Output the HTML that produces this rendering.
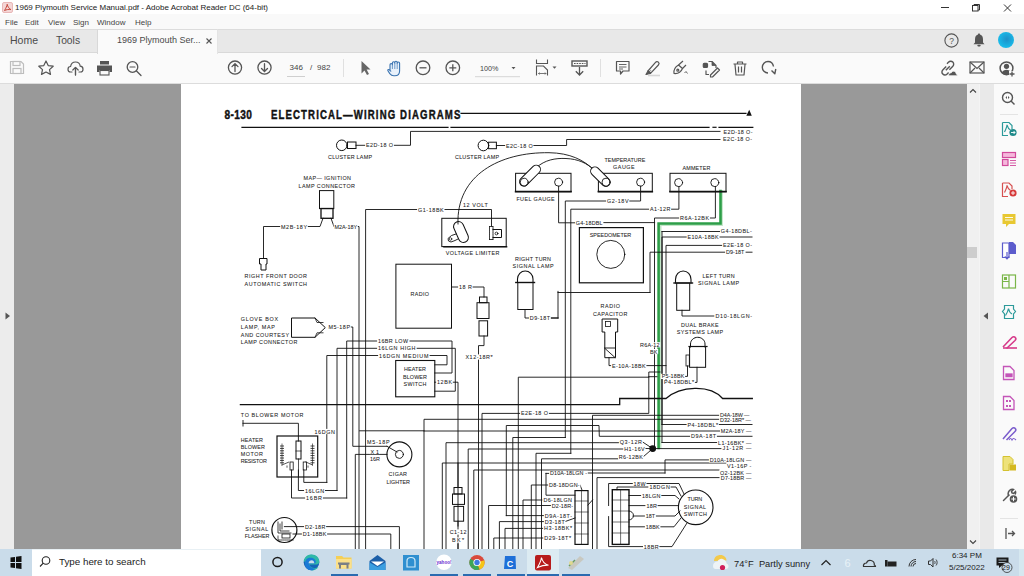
<!DOCTYPE html>
<html><head><meta charset="utf-8">
<style>
*{margin:0;padding:0;box-sizing:border-box}
html,body{width:1024px;height:576px;overflow:hidden;background:#fff;font-family:"Liberation Sans",sans-serif;position:relative}
.a{position:absolute}
#title{left:0;top:0;width:1024px;height:15px;background:#fff}
#menu{left:0;top:14px;width:1024px;height:15px;background:#f9f9f9}
#tabs{left:0;top:29px;width:1024px;height:24px;background:#e8e8e8;border-top:1px solid #dcdcdc;border-bottom:1px solid #d9d9d9}
#tool{left:0;top:53px;width:1024px;height:31px;background:#fafafa;border-bottom:1px solid #dcdcdc}
#lpanel{left:0;top:84px;width:14px;height:465px;background:#ececec}
#gray{left:14px;top:84px;width:953px;height:465px;background:#999}
#page{left:181px;top:84px;width:620px;height:465px;background:#fff}
#vscroll{left:967px;top:84px;width:12px;height:465px;background:#f0f0f0}
#rcoll{left:979px;top:84px;width:15px;height:465px;background:#e9e9e9;border-left:1px solid #f4f4f4}
#rpanel{left:994px;top:84px;width:30px;height:465px;background:#fafafa}
#task{left:0;top:549px;width:1024px;height:27px;background:#cadcea}
.t{position:absolute;white-space:nowrap;color:#222}
</style></head><body>
<div id="title" class="a"></div>
<div id="menu" class="a"></div>
<div id="tabs" class="a"></div>
<div id="tool" class="a"></div>
<div id="lpanel" class="a"></div>
<div id="gray" class="a"></div>
<div id="page" class="a"></div>
<div id="vscroll" class="a"></div>
<div id="rcoll" class="a"></div>
<div id="rpanel" class="a"></div>
<div id="task" class="a"></div>
<!-- TITLE BAR -->
<svg class="a" style="left:2px;top:2px" width="11" height="11" viewBox="0 0 11 11"><rect x="0.5" y="0.5" width="10" height="10" rx="1.5" fill="#f4d6d6" stroke="#e8b8b8"/><path d="M2.5 8.5 C4 6 5 4 5.2 2.3 C5.6 4.5 7 6.5 8.8 7.5 C6.5 7.2 4.5 7.6 2.5 8.5Z" fill="none" stroke="#c0392b" stroke-width="0.9"/></svg>
<div class="t" style="left:15px;top:3px;font-size:8px;line-height:10px;color:#1a1a1a">1969 Plymouth Service Manual.pdf - Adobe Acrobat Reader DC (64-bit)</div>
<svg class="a" style="left:938px;top:3px" width="80" height="10" viewBox="0 0 80 10">
 <line x1="3" y1="4.5" x2="11" y2="4.5" stroke="#333" stroke-width="1"/>
 <rect x="34.5" y="2.5" width="5.5" height="5.5" fill="none" stroke="#333" stroke-width="1"/><path d="M36 2.5V1.5H41.5V7H40" fill="none" stroke="#333" stroke-width="1"/>
 <path d="M66 1.5L73 8.5M73 1.5L66 8.5" stroke="#333" stroke-width="1"/>
</svg>
<!-- MENU -->
<div class="t" style="left:5px;top:18px;font-size:8px;line-height:10px;color:#444">File</div>
<div class="t" style="left:25px;top:18px;font-size:8px;line-height:10px;color:#444">Edit</div>
<div class="t" style="left:48px;top:18px;font-size:8px;line-height:10px;color:#444">View</div>
<div class="t" style="left:73px;top:18px;font-size:8px;line-height:10px;color:#444">Sign</div>
<div class="t" style="left:97px;top:18px;font-size:8px;line-height:10px;color:#444">Window</div>
<div class="t" style="left:135px;top:18px;font-size:8px;line-height:10px;color:#444">Help</div>
<!-- TABS -->
<div class="t" style="left:10px;top:34px;font-size:10.5px;line-height:13px;color:#4a4a4a">Home</div>
<div class="t" style="left:56px;top:34px;font-size:10.3px;line-height:13px;color:#4a4a4a">Tools</div>
<div class="a" style="left:97px;top:29px;width:121px;height:25px;background:#fafafa;border-left:1px solid #d8d8d8;border-right:1px solid #e4e4e4;border-top:1px solid #dcdcdc"></div>
<div class="t" style="left:117px;top:35px;font-size:9px;line-height:11px;color:#4a4a4a">1969 Plymouth Ser...</div>
<svg class="a" style="left:205px;top:37px" width="8" height="8" viewBox="0 0 8 8"><path d="M1.5 1.5L6.5 6.5M6.5 1.5L1.5 6.5" stroke="#555" stroke-width="1.1"/></svg>
<svg class="a" style="left:943px;top:32px" width="17" height="17" viewBox="0 0 17 17"><circle cx="8.5" cy="8.5" r="6.6" fill="none" stroke="#555" stroke-width="1.1"/><text x="8.5" y="11.6" font-size="8.5" text-anchor="middle" fill="#555" font-family="Liberation Sans">?</text></svg>
<svg class="a" style="left:972px;top:32px" width="14" height="16" viewBox="0 0 14 16"><path d="M7 1.5C7.8 1.5 8 2 8 2.6C10.2 3.2 11 5 11 7.5V10.5L12.5 12.2H1.5L3 10.5V7.5C3 5 3.8 3.2 6 2.6C6 2 6.2 1.5 7 1.5Z" fill="#555"/><rect x="5.3" y="12.8" width="3.4" height="1.6" rx="0.8" fill="#555"/></svg>
<div class="a" style="left:998px;top:32px;width:16px;height:16px;border-radius:50%;background:radial-gradient(circle at 55% 45%,#1e90c8,#19b6e6 60%,#3cc9ee)"></div>
<!-- TOOLBAR -->
<svg class="a" style="left:0;top:53px" width="1024" height="30" viewBox="0 53 1024 30">
 <g fill="none" stroke="#bdbdbd" stroke-width="1.2">
  <path d="M10.5 61.5H21L23.5 64V73.5H10.5Z"/><rect x="13" y="61.5" width="7" height="4"/><rect x="13" y="68.5" width="8" height="5"/>
 </g>
 <g fill="none" stroke="#555" stroke-width="1.2" stroke-linejoin="round" stroke-linecap="round">
  <path d="M46 61L48.2 65.6L53.2 66.2L49.5 69.6L50.5 74.4L46 72L41.5 74.4L42.5 69.6L38.8 66.2L43.8 65.6Z"/>
  <path d="M72 72H70.5C68.8 72 68 70.6 68 69.2C68 67.6 69.2 66.5 70.6 66.5C71 63.8 73 62 75.5 62C78.2 62 80 64 80.2 66.2C81.8 66.3 83 67.5 83 69.2C83 70.8 82 72 80.5 72H79"/><path d="M75.5 75V67.5M72.8 70L75.5 67.3L78.2 70"/>
  <path d="M75.5 75V67.5"/>
 </g>
 <g fill="#555">
  <rect x="100" y="61" width="9" height="3.5"/><path d="M97 65.5H112V72H109.5V70H99.5V72H97Z"/><rect x="100" y="70.5" width="9" height="4.5" fill="none" stroke="#555" stroke-width="1.1"/>
 </g>
 <g fill="none" stroke="#555" stroke-width="1.3" stroke-linecap="round">
  <circle cx="132.5" cy="67" r="5.3"/><path d="M136.5 71L141 75.5"/><path d="M130 67H135" stroke-width="1.1"/>
  <circle cx="235" cy="67.6" r="6.6"/><path d="M235 71.5V63.8M232 66.6L235 63.6L238 66.6"/>
  <circle cx="264.5" cy="67.6" r="6.6"/><path d="M264.5 63.7V71.4M261.5 68.5L264.5 71.5L267.5 68.5"/>
 </g>
 <line x1="287" y1="76.5" x2="305" y2="76.5" stroke="#cfcfcf" stroke-width="1"/>
 <line x1="343.5" y1="59" x2="343.5" y2="77" stroke="#e0e0e0" stroke-width="1"/>
 <path d="M361.5 61V73.5L364.5 70.5L367 75L369 74L366.6 69.6H370.5Z" fill="#666"/>
 <path d="M390 70.5V64.8a1.2 1.2 0 0 1 2.4 0V63a1.2 1.2 0 0 1 2.4 0V62.4a1.2 1.2 0 0 1 2.4 0V63.2a1.2 1.2 0 0 1 2.4 0V71c0 3-2 4.8-4.8 4.8h-1c-1.8 0-3-.8-4-2.2l-1.9-2.9c-.5-.8.4-1.6 1.2-1l1.7 1.5Z" fill="#e8f1fb" stroke="#3a73b0" stroke-width="1.1" stroke-linejoin="round"/><path d="M392.4 65V69M394.8 63V69M397.2 63.2V69" stroke="#3a73b0" stroke-width="0.7"/>
 <g fill="none" stroke="#555" stroke-width="1.3">
  <circle cx="423" cy="67.8" r="6.8"/><path d="M419.5 67.8H426.5"/>
  <circle cx="452.8" cy="67.8" r="6.8"/><path d="M449.3 67.8H456.3M452.8 64.3V71.3"/>
 </g>
 <line x1="475" y1="76.7" x2="520" y2="76.7" stroke="#d6d6d6" stroke-width="1"/>
 <path d="M511.5 67L513.5 69.2L515.5 67Z" fill="#555"/>
 <g fill="none" stroke="#555" stroke-width="1.1">
  <path d="M536.5 59.5V63.5H547.5V59.5"/><path d="M536.5 75.5V66H543.5L547.5 70V75.5"/><path d="M538.5 73.5H546M539.5 72.5L538.5 73.5L539.5 74.5M545 72.5L546 73.5L545 74.5" stroke-width="0.8"/>
 </g>
 <path d="M552.5 66.5L554.5 68.7L556.5 66.5Z" fill="#555"/>
 <g fill="none" stroke="#555" stroke-width="1.2">
  <rect x="572" y="61" width="15" height="5" stroke-width="1.4"/><path d="M579.5 67V75M575.8 71.3L579.5 75L583.2 71.3" stroke-width="1.3"/><path d="M574 63.5H585.5" stroke-dasharray="1.6 1" stroke-width="1.2"/>
 </g>
 <line x1="600.5" y1="59" x2="600.5" y2="77" stroke="#e0e0e0" stroke-width="1"/>
 <g fill="none" stroke="#555" stroke-width="1.2" stroke-linejoin="round">
  <path d="M616.5 61.5H629V71H623L620.5 74V71H616.5Z"/><path d="M619 64.5H626.5M619 67H626.5M619 69H623" stroke-width="0.9"/>
  <path d="M648 71L655.5 62.3C656.3 61.4 657.6 61.4 658.4 62.2C659.2 63 659.2 64.2 658.4 65L650.5 73.3Z"/><path d="M649 72.3L651 70.2" stroke-width="0.8"/><path d="M648 71L646 74.5L650.5 73.3Z" fill="#555"/><path d="M648 75.5H660" stroke="#d6d6d6" stroke-width="1.6"/>
  <path d="M674 73.5C673.5 70 675 67 678.5 65L682.5 68.5C681 72 678.5 74 674 73.5Z"/><path d="M678.5 65L683 61M682.5 68.5L686 65"/><path d="M684.5 73L686 71.5L687.5 73.5" stroke-width="0.9"/><circle cx="677.8" cy="70.2" r="1"/>
  <path d="M708.5 61.5H712L716 65.5V68"/><path d="M712 61.5V65.5H716" fill="#555" stroke-width="0.8"/><path d="M706 70.5V74.5H709"/><path d="M710.5 75L717.5 68L719.5 70L712.5 77H710.5Z"/><rect x="703.3" y="63.3" width="4.2" height="4.2" rx="1" fill="#555"/>
  <path d="M733.5 64H746.5M737.5 64V62H742.5V64M735 64.5L736 75H744L745 64.5M738.5 66.5V72.5M741.5 66.5V72.5"/>
  <path d="M773.5 66.5C773 63.6 770.8 61.5 768 61.5C764.8 61.5 762.3 64 762.3 67.3C762.3 70.5 764.8 73 768 73" stroke-width="1.4"/><path d="M771.5 70.5L774.8 73.8L775.8 69" stroke-width="1.4"/>
 </g>
  <g fill="none" stroke="#555" stroke-width="1.4"><path d="M946.2 66.5L943 69.7C941.6 71.1 941.6 72.9 942.8 74.1C944 75.3 945.8 75.3 947.2 73.9L948.6 72.5"/><path d="M945.8 70.2L949.8 66.2"/><path d="M949.4 69.7L952.6 66.5C954 65.1 954 63.3 952.8 62.1C951.6 60.9 949.8 60.9 948.4 62.3L947 63.7"/></g><path d="M948.5 75.8C948.5 74 949.6 72.8 951.2 72.8C951.8 71.6 952.9 71 954 71.2C955.4 71.5 956.2 72.6 956.2 73.9C957 74.1 957.5 74.8 957.5 75.8Z" fill="#555" stroke="#fafafa" stroke-width="0.8"/>
 <g fill="none" stroke="#555" stroke-width="1.2">
  <rect x="970" y="62" width="14" height="11"/><path d="M970 62L977 68.5L984 62M970 73L975 68M984 73L979 68"/>
 </g>
 <circle cx="1006.5" cy="68.3" r="6.4" fill="none" stroke="#555" stroke-width="1.5"/><circle cx="1006.5" cy="66.3" r="2.6" fill="#555"/><path d="M1001.8 72.8C1002.8 70.6 1004.5 69.8 1006.5 69.8C1008.5 69.8 1010.2 70.6 1011.2 72.8C1010 74.2 1008.4 75 1006.5 75C1004.6 75 1003 74.2 1001.8 72.8Z" fill="#555"/><rect x="1009" y="71" width="6" height="6" fill="#fafafa"/><path d="M1012 71.5V76.5M1009.5 74H1014.5" stroke="#555" stroke-width="1.3"/>
</svg>
<div class="t" style="left:289.5px;top:62.5px;font-size:8px;line-height:10px;color:#444">346</div>
<div class="t" style="left:310px;top:62.5px;font-size:8px;line-height:10px;color:#444">/</div><div class="t" style="left:317px;top:62.5px;font-size:8px;line-height:10px;color:#444">982</div>
<div class="t" style="left:480px;top:64px;font-size:7.2px;line-height:9px;color:#444">100%</div>

<!-- LEFT PANEL ARROW -->
<svg class="a" style="left:4px;top:311px" width="8" height="10" viewBox="0 0 8 10"><path d="M1.5 1.5L6 5L1.5 8.5Z" fill="#555"/></svg>
<!-- SCROLLBAR -->
<svg class="a" style="left:967px;top:86px" width="12" height="10" viewBox="0 0 12 10"><path d="M3 6.5L6 3.5L9 6.5" fill="none" stroke="#444" stroke-width="1.1"/></svg>
<div class="a" style="left:967px;top:247px;width:10px;height:11px;background:#cdcdcd"></div>
<svg class="a" style="left:967px;top:537px" width="12" height="10" viewBox="0 0 12 10"><path d="M3 3.5L6 6.5L9 3.5" fill="none" stroke="#444" stroke-width="1.1"/></svg>
<svg class="a" style="left:981px;top:311px" width="10" height="10" viewBox="0 0 10 10"><path d="M7 1.5L2.5 5L7 8.5Z" fill="#555"/></svg>
<!-- RIGHT PANEL ICONS -->
<svg class="a" style="left:994px;top:84px" width="30" height="465" viewBox="994 84 30 465">
 <g fill="none" stroke="#555" stroke-width="1.4"><circle cx="1007.5" cy="97.5" r="5"/><path d="M1011 101L1014.5 104.5"/></g><path d="M1005.5 97.5L1007 96V99Z M1009.5 97.5L1008 96V99Z" fill="#555"/>
 <line x1="1000" y1="114.5" x2="1018" y2="114.5" stroke="#e4e4e4"/>
 <g fill="none" stroke="#2c9a9a" stroke-width="1.2"><path d="M1002.5 122.5H1009L1012 125.5V129M1002.5 122.5V135.5H1008"/><path d="M1004.5 132C1006 129 1007 127 1007 124.8C1007.6 127 1008.5 129 1010.5 130"/></g><circle cx="1013" cy="132.5" r="3.6" fill="#1f8a8a"/><path d="M1011 132.5H1015M1013.6 131L1015 132.5L1013.6 134" stroke="#fff" stroke-width="0.9" fill="none"/>
 <g fill="none" stroke="#d14a9c" stroke-width="1.2"><rect x="1002.5" y="152.5" width="13" height="5" fill="#f5b8dc"/><rect x="1002.5" y="159.5" width="5.5" height="6" fill="#f5b8dc"/><path d="M1010 160.5H1016M1010 163H1016M1010 165.5H1016" stroke-width="0.9"/></g>
 <g fill="none" stroke="#d65050" stroke-width="1.2"><path d="M1002.5 183H1009L1012 186V189M1002.5 183V196.5H1008"/><path d="M1004.5 192.5C1006 189.5 1007 187.5 1007 185.3C1007.6 187.5 1008.5 189.5 1010.5 190.5"/></g><circle cx="1013" cy="193" r="3.6" fill="#d63a3a"/><path d="M1011 193H1015M1013 191V195" stroke="#fff" stroke-width="0.9"/>
 <path d="M1002.5 214H1015.5V224H1009L1006 227V224H1002.5Z" fill="#e8c832"/><path d="M1005 217.5H1013M1005 220H1013" stroke="#fff" stroke-width="0.9"/>
 <path d="M1002.5 243H1009V257.5H1002.5Z" fill="#fff" stroke="#5c5ccc" stroke-width="1.2"/><path d="M1009 242H1013L1016 245V254H1009Z" fill="#5c5ccc"/><path d="M1007 252V258.5M1004.8 256.5L1007 258.8L1009.2 256.5" stroke="#5c5ccc" stroke-width="1.2" fill="none"/>
 <g fill="none" stroke="#7ab648" stroke-width="1.2"><rect x="1002.5" y="275" width="13" height="13"/><path d="M1009 275V288M1002.5 281.5H1009"/></g><path d="M1004 277H1007V280H1004Z" fill="#7ab648"/>
 <g fill="none" stroke="#2c9a9a" stroke-width="1.2"><path d="M1004.5 305.5H1013.5V309L1015.5 311.5L1013.5 314V318.5H1004.5V314L1002.5 311.5L1004.5 309Z"/><path d="M1005.5 315.5C1007 313 1008 311 1008.5 308.5C1009 311 1010 313 1012 314"/></g>
 <g fill="none" stroke="#d63a8a" stroke-width="1.6"><path d="M1003 347L1012 337.5C1013 336.5 1014.5 336.5 1015.3 337.5C1016 338.3 1016 339.5 1015 340.5L1006.5 348.5"/><path d="M1003 348H1017"/></g>
 <g fill="none" stroke="#c455b8" stroke-width="1.3"><path d="M1003.5 366.5H1010L1014 370.5V379.5H1003.5Z"/><rect x="1006" y="374" width="6" height="2.6" fill="#c455b8"/></g>
 <g fill="none" stroke="#c455b8" stroke-width="1.3"><path d="M1003.5 396.5H1010L1014 400.5V409.5H1003.5Z"/></g><path d="M1006 400H1008V402H1006ZM1009 400H1011V402H1009ZM1006 405H1008V407H1006ZM1009 405H1011V407H1009Z" fill="#c455b8"/>
 <g fill="none" stroke="#7a5ccc" stroke-width="1.5"><path d="M1003 439L1012 428.5C1013 427.5 1014.5 427.5 1015.3 428.5C1016 429.3 1016 430.5 1015 431.5L1006.5 440"/><path d="M1009 440C1010 438 1011 438 1012 440C1013 438 1014 438 1016 440" stroke-width="1.1"/></g>
 <path d="M1003 456.5H1010L1013 459.5V464H1009V470.5H1003Z" fill="#eee27a" stroke="#d4c230" stroke-width="1"/><rect x="1009.5" y="464.5" width="6.5" height="6" fill="#d4b820"/>
 <g fill="none" stroke="#555" stroke-width="1.5" stroke-linecap="round"><path d="M1003.5 500.5L1009 495"/><path d="M1008.5 495.5C1007.5 493.5 1008.5 490.5 1011 489.5C1012 489.2 1013 489.3 1013.5 489.5L1011.5 491.5L1012 493L1013.5 493.5L1015.5 491.5C1015.7 492 1015.7 493 1015.3 494"/></g><circle cx="1013.5" cy="499" r="3.8" fill="#555"/><path d="M1011.3 499H1015.7M1013.5 496.8V501.2" stroke="#fff" stroke-width="1"/>
 <line x1="1000" y1="518.5" x2="1018" y2="518.5" stroke="#e4e4e4"/>
 <g fill="none" stroke="#555" stroke-width="1.3"><path d="M1006 528V539"/><path d="M1008 533.5H1014.5M1012 531L1014.5 533.5L1012 536"/></g>
</svg>
<!-- TASKBAR -->
<div class="a" style="left:32px;top:549px;width:229px;height:27px;background:#fff;border-top:1px solid #e8f0f4"></div>
<svg class="a" style="left:0;top:549px" width="1024" height="27" viewBox="0 549 1024 27">
 <path d="M10.5 557.5L15 557V562H10.5Z M16 556.8L21.5 556V562H16Z M10.5 563H15V568L10.5 567.5Z M16 563H21.5V569L16 568.2Z" fill="#111"/>
 <g fill="none" stroke="#222" stroke-width="1.1"><circle cx="46" cy="560.5" r="3.8"/><path d="M43.3 563.2L40 566.5"/></g>
 <circle cx="277.5" cy="562" r="4.6" fill="none" stroke="#1a1a1a" stroke-width="1.5"/>
 <!-- edge -->
 <circle cx="311.5" cy="562.5" r="7.8" fill="#1565b8"/>
 <path d="M304 561C304.5 556.5 308 554.6 311.8 554.6C316 554.6 319.3 557.6 319.3 561.8C319.3 563.5 318 564.5 316.5 564.5H309.5C309.8 567 312.5 568.5 315.5 568C316.8 567.8 317.8 567.4 318.5 567C317 569.2 314.5 570.4 311.8 570.4" fill="#2fb8a8"/>
 <path d="M305 563.5C305 559.5 307.5 557.8 310.5 557.8C313.5 557.8 315.8 559.5 315.8 562.2C315.8 563 315.3 563.4 314.5 563.4H309.3C309.3 566.5 312 568.5 315.5 568.4C314 569.8 312.3 570.4 310.8 570.3C307.5 570 305 567.3 305 563.5Z" fill="#1a7ad6"/>
 <path d="M308.5 563.2C308.8 561.3 310 560.3 311.6 560.3C313.2 560.3 314.2 561.3 314.3 563.2Z" fill="#cadcea"/>
 <!-- explorer -->
 <path d="M336 556H342L343.5 557.5H351.5V568.5H336Z" fill="#f5cf55"/><rect x="336" y="559" width="15.5" height="9.5" fill="#fbe08a"/><path d="M340 568.5V564H347.5V568.5" fill="none" stroke="#7a7f86" stroke-width="2"/><rect x="338" y="562.5" width="11.5" height="2" fill="#7a7f86"/>
 <rect x="331" y="574" width="27" height="2" fill="#2a6bb0"/>
 <!-- mail -->
 <path d="M369.5 561L377.5 555L385.5 561V570H369.5Z" fill="#1c5fa8"/><path d="M369.5 562.5L377.5 567L385.5 562.5V570H369.5Z" fill="#3a9ee0"/><path d="M371 561.5H384L377.5 566Z" fill="#fff"/>
 <!-- blue app -->
 <rect x="403" y="555" width="16" height="15.5" fill="#2f8fd0"/><path d="M407 567V561C407 558.5 408.8 557.5 411 557.5C413.2 557.5 415 558.5 415 561V567H407Z" fill="none" stroke="#cfeaf8" stroke-width="1.2"/>
 <rect x="430" y="574" width="28" height="2" fill="#2a6bb0"/>
 <!-- yahoo -->
 <circle cx="444" cy="562.3" r="7.8" fill="#fff"/><text x="444" y="564" font-size="4.6" text-anchor="middle" fill="#6a2bd0" font-family="Liberation Sans" font-weight="700">yahoo!</text>
 <rect x="463" y="574" width="28" height="2" fill="#2a6bb0"/>
 <!-- chrome -->
 <circle cx="477" cy="562.5" r="7.6" fill="#d94a3c"/><path d="M477 562.5L470.4 566.3A7.6 7.6 0 0 0 479.6 569.6Z" fill="#3aa757"/><path d="M477 562.5L484.3 560.3A7.6 7.6 0 0 1 479.6 569.6Z" fill="#f5c518"/><path d="M470.4 566.3A7.6 7.6 0 0 1 470.4 558.7L477 562.5Z" fill="#3aa757"/><circle cx="477" cy="562.5" r="3.6" fill="#fff"/><circle cx="477" cy="562.5" r="2.7" fill="#3b7ae0"/>
 <rect x="497" y="574" width="28" height="2" fill="#2a6bb0"/>
 <!-- C app -->
 <path d="M505 556H515.5L516 569H504Z" fill="#1e6fd8"/><text x="510" y="566.5" font-size="9" text-anchor="middle" fill="#fff" font-family="Liberation Sans" font-weight="700">C</text>
 <!-- acrobat -->
 <rect x="527" y="549" width="32" height="27" fill="#dcebf2"/>
 <rect x="535" y="555" width="16" height="15.5" rx="2" fill="#b71c1c"/><path d="M537.5 567.5C539.5 564 541 561 541.5 557.5C542.2 561 544 564 548.5 565.2C545 565 541 566 537.5 567.5Z" fill="none" stroke="#fff" stroke-width="1.1"/>
 <rect x="527" y="574" width="32" height="2" fill="#2a6bb0"/>
 <!-- last app -->
 <path d="M568 568L580 556L584 559L572 570Z" fill="#c8c8c0"/><path d="M569 566L575 560" stroke="#6a9a60" stroke-width="1.5"/><circle cx="571" cy="563" r="2" fill="#e0d890"/>
 <rect x="562" y="574" width="28" height="2" fill="#2a6bb0"/>
 <!-- weather -->
 <path d="M714 561C714 557 717 555 720.5 555C724 555 726.5 557.5 726.5 560.5Z" fill="#f3c94a"/><path d="M713 566C713 563 715 561.5 717.5 561.5C718.5 559.5 720.5 558.5 722.5 559C725 559.5 726.5 561.5 726.5 563.5C728 564 728.5 565 728.5 566.5C728.5 568 727.5 569 726 569H715.5C714 569 713 567.8 713 566Z" fill="#eef3f6"/><circle cx="722.5" cy="567.5" r="2.6" fill="#d01e5a"/>
 <path d="M821.5 565L826 560.5L830.5 565" fill="none" stroke="#222" stroke-width="1.2"/>
 <text x="847.5" y="567" font-size="11" text-anchor="middle" fill="#e8f2f7" font-family="Liberation Sans">6</text>
 <path d="M863.5 566.5C863 564.5 864.5 563 866.5 563C867.2 561 869 560 871 560.5C873 561 874.5 562.8 874.3 565C875 565.3 875.5 566 875.5 566.5Z" fill="none" stroke="#333" stroke-width="1.2"/>
 <rect x="885" y="560" width="2.5" height="6.5" fill="#222"/><rect x="887.5" y="561.5" width="9" height="5" fill="#222"/>
 <g fill="none" stroke="#333" stroke-width="1"><path d="M909 566.5A7 7 0 0 1 916 559.5M911 566.5A5 5 0 0 1 916 561.5M913 566.5A3 3 0 0 1 916 563.5"/></g>
 <path d="M928.5 561H930.5L933 558.5V567L930.5 564.5H928.5Z" fill="none" stroke="#333" stroke-width="1"/><path d="M934.5 561C935.3 561.8 935.3 563.2 934.5 564M936 559.5C937.5 561 937.5 564 936 565.5" fill="none" stroke="#333" stroke-width="0.9"/>
 <path d="M996.5 557.5H1008.5V565.5H1002L999 568V565.5H996.5Z" fill="#1a1a1a"/><path d="M998.5 560H1006.5M998.5 562.5H1006.5" stroke="#cadcea" stroke-width="0.8"/>
 <circle cx="1007" cy="567.5" r="5" fill="#cadcea" stroke="#333" stroke-width="0.8"/>
 <rect x="1019" y="549" width="5" height="27" fill="#d6e8f0"/>
</svg>
<div class="t" style="left:59px;top:556px;font-size:9.8px;line-height:12px;color:#222">Type here to search</div>
<div class="t" style="left:734px;top:558px;font-size:9.3px;line-height:12px;color:#222">74°F&nbsp; Partly sunny</div>
<div class="t" style="left:952px;top:551px;font-size:8px;line-height:10px;color:#222">6:34 PM</div>
<div class="t" style="left:949px;top:563px;font-size:8px;line-height:10px;color:#222">5/25/2022</div>
<div class="t" style="left:1002px;top:563px;font-size:7px;line-height:9px;color:#111">29</div>

<!--DIAGRAM-->
<svg class="a" style="left:0;top:0" width="1024" height="576" viewBox="0 0 1024 576"><defs><clipPath id="pg"><rect x="181" y="84" width="620" height="465"/></clipPath></defs><g clip-path="url(#pg)" font-family="Liberation Sans" fill="none" stroke-linecap="square">
<!--under--><path d="M722 191V225H660.6V448" fill="none" stroke="#c2e6c8" stroke-width="1.8"/>
<!--under--><path d="M720.5 191V223.5H658.6V448" fill="none" stroke="#2d9e48" stroke-width="2.6"/>
<path d="M461 113.4 L746 113.4" stroke="#111" stroke-width="1.1"/>
<path d="M242 127.3 L448 127.3" stroke="#111" stroke-width="1.2"/>
<path d="M451 127.3 L709 127.3" stroke="#111" stroke-width="1.2"/>
<path d="M713 127.3 L716 127.3" stroke="#111" stroke-width="1.2"/>
<path d="M719 127.3 L752.8 127.3" stroke="#111" stroke-width="1.2"/>
<path d="M356 145.3 L365 145.3" stroke="#111" stroke-width="0.9"/>
<path d="M394 145.3 L410.5 145.3 L410.5 131.4 L720 131.4" stroke="#111" stroke-width="0.9"/>
<path d="M496.4 145.5 L505 145.5" stroke="#111" stroke-width="0.9"/>
<path d="M533 145.5 L566.6 145.5 L566.6 139.5 L720 139.5" stroke="#111" stroke-width="0.9"/>
<path d="M323 218.3 L320 226.5 L307 226.5" stroke="#111" stroke-width="0.9"/>
<path d="M331 218.3 L334 226.5" stroke="#111" stroke-width="0.9"/>
<path d="M281 226.5 L263.5 226.5 L263.5 258.4" stroke="#111" stroke-width="0.9"/>
<path d="M357 226.5 L359 226.5 L359 549" stroke="#111" stroke-width="0.9"/>
<path d="M365.6 549 L365.6 209.5 L417 209.5" stroke="#111" stroke-width="0.9"/>
<path d="M444 209.5 L491.5 209.5 L491.5 226" stroke="#111" stroke-width="0.9"/>
<path d="M558.6 186.2 L558.6 222.8 L575 222.8" stroke="#111" stroke-width="0.9"/>
<path d="M603 222.6 L654.6 222.6" stroke="#111" stroke-width="0.9"/>
<path d="M640.6 186.2 L640.6 201 L629 201" stroke="#111" stroke-width="0.9"/>
<path d="M606 201 L565.3 201 L565.3 437.5" stroke="#111" stroke-width="0.9"/>
<path d="M678.9 186.6 L678.9 209.2 L671 209.2" stroke="#111" stroke-width="0.9"/>
<path d="M649 209.2 L570.8 209.2 L570.8 453.3" stroke="#111" stroke-width="0.9"/>
<path d="M715.4 186.6 L715.4 218 L710 218" stroke="#111" stroke-width="0.9"/>
<path d="M679 218 L654.5 218 L654.5 447" stroke="#111" stroke-width="0.9"/>
<path d="M662 231.5 L720 231.5" stroke="#111" stroke-width="0.9"/>
<path d="M662 424.5 L662 237 L687 237" stroke="#111" stroke-width="0.9"/>
<path d="M719 237 L752 237" stroke="#111" stroke-width="0.9"/>
<path d="M666 382.4 L666 245.4 L722 245.4" stroke="#111" stroke-width="0.9"/>
<path d="M650 292.5 L650 252.2 L725 252.2" stroke="#111" stroke-width="0.9"/>
<path d="M746 252.2 L752 252.2" stroke="#111" stroke-width="0.9"/>
<path d="M662 442.5 L662 231.5" stroke="#111" stroke-width="0.9"/>
<path d="M558 292.5 L650 292.5" stroke="#111" stroke-width="0.9"/>
<path d="M558 318 L558 291.4" stroke="#111" stroke-width="0.9"/>
<path d="M558 318 L540 318" stroke="#111" stroke-width="0.9"/>
<path d="M682 310.3 L682 316 L714 316" stroke="#111" stroke-width="0.9"/>
<path d="M609 357.7 L609 365.6 L611 365.6" stroke="#111" stroke-width="0.9"/>
<path d="M646 365.6 L666 365.6" stroke="#111" stroke-width="0.9"/>
<path d="M687.5 366 L687.5 376.4 L685 376.4" stroke="#111" stroke-width="0.9"/>
<path d="M697 367.3 L697 382.4 L695 382.4" stroke="#111" stroke-width="0.9"/>
<path d="M648.8 376.7 L657 376.7" stroke="#111" stroke-width="0.9"/>
<path d="M451.5 287 L458 287" stroke="#111" stroke-width="0.9"/>
<path d="M472 287 L484 287 L484 297" stroke="#111" stroke-width="0.9"/>
<path d="M484 336 L484 345.6 L478.5 345.6 L478.5 549" stroke="#111" stroke-width="0.9"/>
<path d="M525 309.5 L525 318 L529 318" stroke="#111" stroke-width="0.9"/>
<path d="M551 318 L558 318" stroke="#111" stroke-width="0.9"/>
<path d="M350 327 L352.8 327 L352.8 446.3 L387 446.3" stroke="#111" stroke-width="0.9"/>
<path d="M346.7 498 L346.7 341 L377 341" stroke="#111" stroke-width="0.9"/>
<path d="M410 341 L452 341 L452 373 L434.8 373" stroke="#111" stroke-width="0.9"/>
<path d="M337 490.5 L337 348.3 L377 348.3" stroke="#111" stroke-width="0.9"/>
<path d="M417 348.3 L455.3 348.3 L455.3 391.2 L434.8 391.2" stroke="#111" stroke-width="0.9"/>
<path d="M326.8 482.4 L326.8 355.5 L378 355.5" stroke="#111" stroke-width="0.9"/>
<path d="M430 355.5 L447 355.5 L447 364.8 L434.8 364.8" stroke="#111" stroke-width="0.9"/>
<path d="M434.8 382.2 L436 382.2" stroke="#111" stroke-width="0.9"/>
<path d="M452 382.2 L458 382.2 L458 549" stroke="#111" stroke-width="0.9"/>
<path d="M359.6 430.8 L424 430.8" stroke="#111" stroke-width="0.9"/>
<path d="M243 420.5 L243 426" stroke="#111" stroke-width="0.9"/>
<path d="M243 423.3 L298.4 423.3 L298.4 441" stroke="#111" stroke-width="0.9"/>
<path d="M326.8 482.4 L303.8 482.4 L303.8 470" stroke="#111" stroke-width="0.9"/>
<path d="M337 490.5 L325 490.5" stroke="#111" stroke-width="0.9"/>
<path d="M304 490.5 L298.4 490.5 L298.4 470" stroke="#111" stroke-width="0.9"/>
<path d="M346.7 498 L323 498" stroke="#111" stroke-width="0.9"/>
<path d="M305 498 L291.5 498 L291.5 470" stroke="#111" stroke-width="0.9"/>
<path d="M355.3 549 L355.3 454.4 L387 454.4" stroke="#111" stroke-width="0.9"/>
<path d="M387 446.3 L397 452" stroke="#111" stroke-width="0.9"/>
<path d="M424 549 L424 419.3 L719 419.3" stroke="#111" stroke-width="0.9"/>
<path d="M518.3 549 L518.3 377.2 L648.8 377.2" stroke="#111" stroke-width="0.9"/>
<path d="M565.3 437.5 L512.8 437.5 L512.8 549" stroke="#111" stroke-width="0.9"/>
<path d="M570.8 453.3 L536 453.3 L536 549" stroke="#111" stroke-width="0.9"/>
<path d="M482 549 L482 413.4 L520 413.4" stroke="#111" stroke-width="0.9"/>
<path d="M549 413.4 L648.8 413.4 L648.8 372 L660 372" stroke="#111" stroke-width="0.9"/>
<path d="M506.3 515.6 L506.3 425.5 L599 425.5 L599.3 436.3 L690 436.3" stroke="#111" stroke-width="0.9"/>
<path d="M717 436.3 L752 436.3" stroke="#111" stroke-width="0.9"/>
<path d="M424 431 L720 431" stroke="#111" stroke-width="0.9"/>
<path d="M446 549 L446 442.7 L619 442.7" stroke="#111" stroke-width="0.9"/>
<path d="M642 441.6 L652.7 448.6" stroke="#111" stroke-width="0.9"/>
<path d="M468.2 549 L468.2 449 L623 449" stroke="#111" stroke-width="0.9"/>
<path d="M645 448.5 L652.7 448.6" stroke="#111" stroke-width="0.9"/>
<path d="M541.5 549 L541.5 458.8 L618 458.8" stroke="#111" stroke-width="0.9"/>
<path d="M643 457 L652.7 448.6" stroke="#111" stroke-width="0.9"/>
<path d="M442.3 549 L442.3 463 L726 463" stroke="#111" stroke-width="0.9"/>
<path d="M473.8 549 L473.8 470 L719 470" stroke="#111" stroke-width="0.9"/>
<path d="M592.5 549 L592.5 415.3 L719 415.3" stroke="#111" stroke-width="0.9"/>
<path d="M652.7 448.6 L721 448.6" stroke="#111" stroke-width="0.9"/>
<path d="M662 442.5 L717 442.5" stroke="#111" stroke-width="0.9"/>
<path d="M662 424.5 L687 424.5" stroke="#111" stroke-width="0.9"/>
<path d="M718 424.5 L752 424.5" stroke="#111" stroke-width="0.9"/>
<path d="M665 473 L665 459.9 L709 459.9" stroke="#111" stroke-width="0.9"/>
<path d="M597 549 L597 477.6 L719 477.6" stroke="#111" stroke-width="0.9"/>
<path d="M560 473 L665 473" stroke="#111" stroke-width="0.9"/>
<path d="M575 501 L588 501" stroke="#111" stroke-width="0.6"/>
<path d="M575 512 L588 512" stroke="#111" stroke-width="0.6"/>
<path d="M575 523 L588 523" stroke="#111" stroke-width="0.6"/>
<path d="M575 534 L588 534" stroke="#111" stroke-width="0.6"/>
<path d="M581.5 490.6 L581.5 544.4" stroke="#111" stroke-width="0.6"/>
<path d="M546 473.4 L549 473.4" stroke="#111" stroke-width="0.9"/>
<path d="M546 473.4 L546 495.2 L575 495.2" stroke="#111" stroke-width="0.9"/>
<path d="M531.3 549 L531.3 485 L548 485" stroke="#111" stroke-width="0.9"/>
<path d="M580 485 L582 490" stroke="#111" stroke-width="0.9"/>
<path d="M523 549 L523 500 L542 500" stroke="#111" stroke-width="0.9"/>
<path d="M488.6 549 L488.6 505.5 L551 505.5" stroke="#111" stroke-width="0.9"/>
<path d="M506.3 515.6 L544 515.6" stroke="#111" stroke-width="0.9"/>
<path d="M499.4 549 L499.4 521.6 L544 521.6" stroke="#111" stroke-width="0.9"/>
<path d="M565 521.6 L575 518" stroke="#111" stroke-width="0.9"/>
<path d="M505 549 L505 528.4 L543 528.4" stroke="#111" stroke-width="0.9"/>
<path d="M493.8 549 L493.8 538 L543 538" stroke="#111" stroke-width="0.9"/>
<path d="M588 505 L592.5 500" stroke="#111" stroke-width="0.9"/>
<path d="M458 463 L458 487.5" stroke="#111" stroke-width="0.9"/>
<path d="M458 521.2 L458 526" stroke="#111" stroke-width="0.9"/>
<path d="M458 544 L458 549" stroke="#111" stroke-width="0.9"/>
<path d="M284.4 526.6 L304 526.6" stroke="#111" stroke-width="0.9"/>
<path d="M326 526.6 L399.4 526.6 L399.4 549" stroke="#111" stroke-width="0.9"/>
<path d="M293 534 L302 534" stroke="#111" stroke-width="0.9"/>
<path d="M327 534 L390.8 534 L390.8 549" stroke="#111" stroke-width="0.9"/>
<path d="M612.3 500 L629 500" stroke="#111" stroke-width="0.6"/>
<path d="M612.3 511 L629 511" stroke="#111" stroke-width="0.6"/>
<path d="M612.3 522 L629 522" stroke="#111" stroke-width="0.6"/>
<path d="M612.3 533 L629 533" stroke="#111" stroke-width="0.6"/>
<path d="M620.6 489.7 L620.6 544.4" stroke="#111" stroke-width="0.6"/>
<path d="M608.6 505.5 L608.6 483.5 L633 483.5" stroke="#111" stroke-width="0.9"/>
<path d="M646 483.5 L679 483.5 L684 494" stroke="#111" stroke-width="0.9"/>
<path d="M617 489.7 L617 487 L648 487" stroke="#111" stroke-width="0.9"/>
<path d="M670 487 L676 487 L681 496" stroke="#111" stroke-width="0.9"/>
<path d="M629 495.5 L641 495.5" stroke="#111" stroke-width="0.9"/>
<path d="M661 495.5 L675 495.5 L679 499" stroke="#111" stroke-width="0.9"/>
<path d="M629 505.6 L645 505.6" stroke="#111" stroke-width="0.9"/>
<path d="M657 505.6 L678.4 505.6" stroke="#111" stroke-width="0.9"/>
<path d="M633 516 L644.7 516" stroke="#111" stroke-width="0.9"/>
<path d="M656 516 L675 516 L680 511" stroke="#111" stroke-width="0.9"/>
<path d="M629 526.8 L644.7 526.8" stroke="#111" stroke-width="0.9"/>
<path d="M660 526.8 L674 526.8 L681 518" stroke="#111" stroke-width="0.9"/>
<path d="M608.6 516.6 L608.6 546.6 L643 546.6" stroke="#111" stroke-width="0.9"/>
<path d="M659 546.6 L672 546.6 L687 523" stroke="#111" stroke-width="0.9"/>
<circle cx="341.8" cy="145.3" r="5.3" stroke="#111" stroke-width="1" fill="none"/>
<circle cx="483.4" cy="145.5" r="5.3" stroke="#111" stroke-width="1" fill="none"/>
<circle cx="558.6" cy="182.2" r="4" stroke="#111" stroke-width="0.9" fill="none"/>
<circle cx="640.6" cy="182.2" r="4" stroke="#111" stroke-width="0.9" fill="none"/>
<circle cx="678.6" cy="182.6" r="4" stroke="#111" stroke-width="0.9" fill="none"/>
<circle cx="714.8" cy="182.6" r="4" stroke="#111" stroke-width="0.9" fill="none"/>
<circle cx="610.8" cy="254.4" r="14" stroke="#111" stroke-width="0.9" fill="none"/>
<circle cx="399.4" cy="454.4" r="12.5" stroke="#111" stroke-width="1.1" fill="none"/>
<circle cx="399.4" cy="454.4" r="4" stroke="#111" stroke-width="0.9" fill="none"/>
<circle cx="652.7" cy="448.6" r="3.4" stroke="#111" stroke-width="0" fill="#111"/>
<circle cx="284.4" cy="530" r="12.5" stroke="#111" stroke-width="1.2" fill="none"/>
<circle cx="695.7" cy="507.3" r="17.3" stroke="#111" stroke-width="1.1" fill="none"/>
<rect x="347.5" y="142" width="8.5" height="6.5" stroke="#111" stroke-width="1" fill="none"/>
<rect x="488.6" y="142.2" width="7.8" height="6.5" stroke="#111" stroke-width="1" fill="none"/>
<rect x="319.5" y="190.6" width="14.3" height="18" stroke="#111" stroke-width="1" fill="none"/>
<rect x="321" y="208.5" width="12" height="9.8" stroke="#111" stroke-width="1.3" fill="none"/>
<rect x="441.8" y="218.3" width="64.4" height="28.3" stroke="#111" stroke-width="1" fill="none"/>
<rect x="515.6" y="173.3" width="55.4" height="18.3" stroke="#111" stroke-width="1" fill="none"/>
<rect x="598.4" y="173.3" width="53.9" height="18.3" stroke="#111" stroke-width="1" fill="none"/>
<rect x="670" y="173.3" width="56" height="18.3" stroke="#111" stroke-width="1" fill="none"/>
<rect x="579.4" y="227.6" width="64" height="55.2" stroke="#111" stroke-width="1.2" fill="none"/>
<rect x="676.7" y="283" width="13" height="27.3" stroke="#111" stroke-width="1" fill="none"/>
<rect x="689.6" y="346.5" width="16" height="20.8" stroke="#111" stroke-width="1" fill="none"/>
<rect x="686" y="355" width="3.3" height="11" stroke="#111" stroke-width="0.8" fill="none"/>
<rect x="395.9" y="264.2" width="55.6" height="64" stroke="#111" stroke-width="1" fill="none"/>
<rect x="517.8" y="282.5" width="15.2" height="27" stroke="#111" stroke-width="1" fill="none"/>
<rect x="395.7" y="360.5" width="39.1" height="36.3" stroke="#111" stroke-width="1.1" fill="none"/>
<rect x="277" y="436" width="40.7" height="41" stroke="#111" stroke-width="1.2" fill="none"/>
<rect x="575" y="490.6" width="13" height="53.8" stroke="#111" stroke-width="1.2" fill="none"/>
<rect x="612.3" y="489.7" width="16.7" height="54.7" stroke="#111" stroke-width="1.4" fill="none"/>
<text transform="translate(224.4,119) scale(0.78,1)" font-size="13" font-weight="700" textLength="35.1" lengthAdjust="spacing" fill="#111" stroke="#111" stroke-width="0.45">8-130</text>
<text transform="translate(271,119) scale(0.74,1)" font-size="13" font-weight="700" textLength="255.8" lengthAdjust="spacing" fill="#111" stroke="#111" stroke-width="0.45">ELECTRICAL—WIRING DIAGRAMS</text>
<path d="M746.3 115.8L749.2 109.8L751.8 115.8Z" fill="#111"/>
<path d="M260 258.5H267V264H266V270H261V264H260Z" fill="none" stroke="#111" stroke-width="1"/>
<path d="M444 246.8H506.5" stroke="#111" stroke-width="1.6"/>
<g transform="translate(461,232) rotate(-24)"><rect x="-5" y="-11" width="10" height="22" rx="5" fill="#fff" stroke="#111" stroke-width="1"/></g>
<path d="M456 234L451.5 235.5L448 238.5L448.5 241L451 242L455 240.5L458 239" fill="none" stroke="#111" stroke-width="0.9"/><circle cx="450.5" cy="239" r="1.3" fill="none" stroke="#111" stroke-width="0.7"/>
<path d="M489.5 226.5V239.5M489.5 226.5H493M489.5 239.5H493M493 226.5V239.5" fill="none" stroke="#111" stroke-width="0.8" stroke-dasharray="1.2 0.8"/><path d="M493 229.5H501.5V237.5H493" fill="none" stroke="#111" stroke-width="1"/><circle cx="496.5" cy="233.5" r="1.4" fill="none" stroke="#111" stroke-width="0.8"/>
<path d="M458 224C456 175 500 152 549 152.7C570 153 584 160 594 170" fill="none" stroke="#111" stroke-width="0.9"/>
<path d="M537 167C545 160 555 158 566 158.5C578 159 587 163 594 170" fill="none" stroke="#111" stroke-width="0.9"/>
<path d="M515.6 191.6H571" stroke="#111" stroke-width="1.6"/>
<g transform="translate(530,175.6) rotate(45)"><rect x="-4.3" y="-13" width="8.6" height="26" rx="4.3" fill="#fff" stroke="#111" stroke-width="1"/></g>
<circle cx="524.2" cy="182.2" r="4" fill="none" stroke="#111" stroke-width="0.9"/>
<path d="M598.4 191.6H652.3" stroke="#111" stroke-width="1.6"/>
<g transform="translate(600.4,176.7) rotate(-45)"><rect x="-4.3" y="-12" width="8.6" height="24" rx="4.3" fill="#fff" stroke="#111" stroke-width="1"/></g>
<circle cx="606" cy="182.2" r="4" fill="none" stroke="#111" stroke-width="0.9"/>
<path d="M670 191.6H726" stroke="#111" stroke-width="1.6"/>
<path d="M675.5 283V279.5C675.5 274.5 679 271 683.2 271C687.5 271 691 274.5 691 279.5V283" fill="none" stroke="#111" stroke-width="1.1"/>
<path d="M674 283H692.5" stroke="#111" stroke-width="1.4"/>
<path d="M602.6 319H617.7V332H615.5V357.7H604.8V332H602.6Z" fill="none" stroke="#111" stroke-width="1"/><rect x="605.5" y="321.5" width="5" height="5" fill="none" stroke="#111" stroke-width="0.8"/><path d="M604.8 348H615.5M605 348.5L615 357.5" stroke="#111" stroke-width="0.9"/>
<path d="M690.5 347V344C690.5 340 694 337.3 697.7 337.3C701.5 337.3 705 340 705 344V347" fill="none" stroke="#111" stroke-width="1"/>
<path d="M689 346.5H707" stroke="#111" stroke-width="1.2"/>
<path d="M240.4 404.7H619.7V398.5H666C680 386 710 384 722.6 398.5H752.3" fill="none" stroke="#111" stroke-width="1.3"/>
<rect x="479.5" y="297" width="7.5" height="5.7" fill="none" stroke="#111" stroke-width="1"/><rect x="477" y="302.7" width="12" height="15.8" fill="none" stroke="#111" stroke-width="1"/><rect x="479" y="320.8" width="8.6" height="15.2" fill="none" stroke="#111" stroke-width="1"/>
<path d="M517.5 282.5V279C517.5 274.5 521 271 525.2 271C529.5 271 533 274.5 533 279V282.5" fill="none" stroke="#111" stroke-width="1.1"/>
<path d="M515.8 282.5H534.5" stroke="#111" stroke-width="1.4"/>
<path d="M292 318H315L325.3 327.6L315 337.3H292Z" fill="none" stroke="#111" stroke-width="1"/><path d="M315 318L317 322.5H323M315 337.3L317 332.8H323" fill="none" stroke="#111" stroke-width="0.8"/>
<rect x="296" y="441" width="5" height="18" fill="none" stroke="#111" stroke-width="1"/><path d="M296 451H301" stroke="#111" stroke-width="0.7"/><path d="M282 444V465M312.5 444V465" stroke="#111" stroke-width="0.6"/><path d="M280.5 446.0H283.5M280.5 448.4H283.5M280.5 450.8H283.5M280.5 453.2H283.5M280.5 455.6H283.5M280.5 458.0H283.5M280.5 460.4H283.5M280.5 462.8H283.5M311 446.0H314M311 448.4H314M311 450.8H314M311 453.2H314M311 455.6H314M311 458.0H314M311 460.4H314M311 462.8H314" stroke="#111" stroke-width="0.8"/><path d="M282 465L289 462M312.5 465L306 462M287 466V468M308 466V468" fill="none" stroke="#111" stroke-width="0.7" stroke-dasharray="1.2 0.8"/><rect x="290" y="462" width="3.2" height="8" fill="none" stroke="#111" stroke-width="0.8"/><rect x="303.2" y="462" width="3.2" height="8" fill="none" stroke="#111" stroke-width="0.8"/><path d="M298.5 459V476" stroke="#111" stroke-width="0.7"/>
<rect x="454" y="487.5" width="8" height="6.5" fill="none" stroke="#111" stroke-width="1"/><rect x="452.5" y="494" width="12" height="10.4" fill="none" stroke="#111" stroke-width="1"/><rect x="454" y="506.4" width="9.6" height="14.8" fill="none" stroke="#111" stroke-width="1"/>
<path d="M278 522V533H291M280 524V531H289M282 522V529" fill="none" stroke="#111" stroke-width="0.8"/><rect x="282" y="534" width="8" height="4" fill="none" stroke="#111" stroke-width="0.8"/><path d="M278 536V540H294" fill="none" stroke="#111" stroke-width="0.7" stroke-dasharray="1.2 0.8"/>
<path d="M629 511A4.5 4.5 0 0 1 629 520" fill="none" stroke="#111" stroke-width="0.9"/>
<rect x="365.2" y="142.70000000000002" width="28.6" height="5.2" fill="#fff" stroke="none"/>
<text x="366" y="147.3" font-size="5.4" textLength="27" lengthAdjust="spacing" fill="#1a1a1a" stroke="#1a1a1a" stroke-width="0.06">E2D-18 O</text>
<rect x="722.7" y="128.9" width="30.6" height="5.2" fill="#fff" stroke="none"/>
<text x="723.5" y="133.5" font-size="5.4" textLength="29" lengthAdjust="spacing" fill="#1a1a1a" stroke="#1a1a1a" stroke-width="0.06">E2D-18 O-</text>
<rect x="327.2" y="154.20000000000002" width="45.6" height="5.2" fill="#fff" stroke="none"/>
<text x="328" y="158.8" font-size="5.4" textLength="44" lengthAdjust="spacing" fill="#1a1a1a" stroke="#1a1a1a" stroke-width="0.06">CLUSTER LAMP</text>
<rect x="505.2" y="142.9" width="28.200000000000003" height="5.2" fill="#fff" stroke="none"/>
<text x="506" y="147.5" font-size="5.4" textLength="26.6" lengthAdjust="spacing" fill="#1a1a1a" stroke="#1a1a1a" stroke-width="0.06">E2C-18 O</text>
<rect x="722.2" y="136.8" width="30.6" height="5.2" fill="#fff" stroke="none"/>
<text x="723" y="141.4" font-size="5.4" textLength="29" lengthAdjust="spacing" fill="#1a1a1a" stroke="#1a1a1a" stroke-width="0.06">E2C-18 O-</text>
<rect x="454.2" y="154.20000000000002" width="45.6" height="5.2" fill="#fff" stroke="none"/>
<text x="455" y="158.8" font-size="5.4" textLength="44" lengthAdjust="spacing" fill="#1a1a1a" stroke="#1a1a1a" stroke-width="0.06">CLUSTER LAMP</text>
<rect x="302.7" y="175.4" width="49.1" height="5.2" fill="#fff" stroke="none"/>
<text x="303.5" y="180.0" font-size="5.4" textLength="47.5" lengthAdjust="spacing" fill="#1a1a1a" stroke="#1a1a1a" stroke-width="0.06">MAP— IGNITION</text>
<rect x="297.8" y="183.4" width="58.0" height="5.2" fill="#fff" stroke="none"/>
<text x="298.6" y="188.0" font-size="5.4" textLength="56.4" lengthAdjust="spacing" fill="#1a1a1a" stroke="#1a1a1a" stroke-width="0.06">LAMP CONNECTOR</text>
<rect x="280.2" y="223.9" width="27.6" height="5.2" fill="#fff" stroke="none"/>
<text x="281" y="228.5" font-size="5.4" textLength="26" lengthAdjust="spacing" fill="#1a1a1a" stroke="#1a1a1a" stroke-width="0.06">M2B-18Y</text>
<rect x="243.7" y="273.4" width="64.1" height="5.2" fill="#fff" stroke="none"/>
<text x="244.5" y="278.0" font-size="5.4" textLength="62.5" lengthAdjust="spacing" fill="#1a1a1a" stroke="#1a1a1a" stroke-width="0.06">RIGHT FRONT DOOR</text>
<rect x="243.7" y="281.4" width="64.1" height="5.2" fill="#fff" stroke="none"/>
<text x="244.5" y="286.0" font-size="5.4" textLength="62.5" lengthAdjust="spacing" fill="#1a1a1a" stroke="#1a1a1a" stroke-width="0.06">AUTOMATIC SWITCH</text>
<rect x="333.7" y="223.9" width="24.1" height="5.2" fill="#fff" stroke="none"/>
<text x="334.5" y="228.5" font-size="5.4" textLength="22.5" lengthAdjust="spacing" fill="#1a1a1a" stroke="#1a1a1a" stroke-width="0.06">M2A-18Y</text>
<rect x="417.2" y="206.9" width="27.3" height="5.2" fill="#fff" stroke="none"/>
<text x="418" y="211.5" font-size="5.4" textLength="25.7" lengthAdjust="spacing" fill="#1a1a1a" stroke="#1a1a1a" stroke-width="0.06">G1-18BK</text>
<rect x="462.2" y="202.4" width="26.3" height="5.2" fill="#fff" stroke="none"/>
<text x="463" y="207.0" font-size="5.4" textLength="24.7" lengthAdjust="spacing" fill="#1a1a1a" stroke="#1a1a1a" stroke-width="0.06">12 VOLT</text>
<rect x="444.9" y="250.3" width="55.300000000000004" height="5.2" fill="#fff" stroke="none"/>
<text x="445.7" y="254.9" font-size="5.4" textLength="53.7" lengthAdjust="spacing" fill="#1a1a1a" stroke="#1a1a1a" stroke-width="0.06">VOLTAGE LIMITER</text>
<rect x="515.6" y="196.1" width="39.9" height="5.2" fill="#fff" stroke="none"/>
<text x="516.4" y="200.7" font-size="5.4" textLength="38.3" lengthAdjust="spacing" fill="#1a1a1a" stroke="#1a1a1a" stroke-width="0.06">FUEL GAUGE</text>
<rect x="575.0" y="220.20000000000002" width="28.400000000000002" height="5.2" fill="#fff" stroke="none"/>
<text x="575.8" y="224.8" font-size="5.4" textLength="26.8" lengthAdjust="spacing" fill="#1a1a1a" stroke="#1a1a1a" stroke-width="0.06">G4-18DBL</text>
<rect x="603.6" y="157.70000000000002" width="42.6" height="5.2" fill="#fff" stroke="none"/>
<text x="604.4" y="162.3" font-size="5.4" textLength="41" lengthAdjust="spacing" fill="#1a1a1a" stroke="#1a1a1a" stroke-width="0.06">TEMPERATURE</text>
<rect x="612.2" y="164.70000000000002" width="23.3" height="5.2" fill="#fff" stroke="none"/>
<text x="613" y="169.3" font-size="5.4" textLength="21.7" lengthAdjust="spacing" fill="#1a1a1a" stroke="#1a1a1a" stroke-width="0.06">GAUGE</text>
<rect x="606.2" y="198.4" width="23.1" height="5.2" fill="#fff" stroke="none"/>
<text x="607" y="203.0" font-size="5.4" textLength="21.5" lengthAdjust="spacing" fill="#1a1a1a" stroke="#1a1a1a" stroke-width="0.06">G2-18V</text>
<rect x="681.7" y="165.4" width="29.6" height="5.2" fill="#fff" stroke="none"/>
<text x="682.5" y="170.0" font-size="5.4" textLength="28" lengthAdjust="spacing" fill="#1a1a1a" stroke="#1a1a1a" stroke-width="0.06">AMMETER</text>
<rect x="649.2" y="206.6" width="21.900000000000002" height="5.2" fill="#fff" stroke="none"/>
<text x="650" y="211.2" font-size="5.4" textLength="20.3" lengthAdjust="spacing" fill="#1a1a1a" stroke="#1a1a1a" stroke-width="0.06">A1-12R</text>
<rect x="679.2" y="215.4" width="30.6" height="5.2" fill="#fff" stroke="none"/>
<text x="680" y="220.0" font-size="5.4" textLength="29" lengthAdjust="spacing" fill="#1a1a1a" stroke="#1a1a1a" stroke-width="0.06">R6A-12BK</text>
<rect x="720.0" y="228.20000000000002" width="32.6" height="5.2" fill="#fff" stroke="none"/>
<text x="720.8" y="232.8" font-size="5.4" textLength="31" lengthAdjust="spacing" fill="#1a1a1a" stroke="#1a1a1a" stroke-width="0.06">G4-18DBL-</text>
<rect x="686.7" y="234.4" width="32.8" height="5.2" fill="#fff" stroke="none"/>
<text x="687.5" y="239.0" font-size="5.4" textLength="31.2" lengthAdjust="spacing" fill="#1a1a1a" stroke="#1a1a1a" stroke-width="0.06">E10A-18BK</text>
<rect x="722.2" y="242.8" width="30.6" height="5.2" fill="#fff" stroke="none"/>
<text x="723" y="247.4" font-size="5.4" textLength="29" lengthAdjust="spacing" fill="#1a1a1a" stroke="#1a1a1a" stroke-width="0.06">E2E-18 O-</text>
<rect x="725.2" y="249.6" width="20.0" height="5.2" fill="#fff" stroke="none"/>
<text x="726" y="254.2" font-size="5.4" textLength="18.4" lengthAdjust="spacing" fill="#1a1a1a" stroke="#1a1a1a" stroke-width="0.06">D9-18T</text>
<rect x="588.9000000000001" y="232.1" width="43.1" height="5.2" fill="#fff" stroke="none"/>
<text x="589.7" y="236.7" font-size="5.4" textLength="41.5" lengthAdjust="spacing" fill="#1a1a1a" stroke="#1a1a1a" stroke-width="0.06">SPEEDOMETER</text>
<rect x="701.7" y="272.9" width="33.800000000000004" height="5.2" fill="#fff" stroke="none"/>
<text x="702.5" y="277.5" font-size="5.4" textLength="32.2" lengthAdjust="spacing" fill="#1a1a1a" stroke="#1a1a1a" stroke-width="0.06">LEFT TURN</text>
<rect x="697.2" y="280.0" width="42.6" height="5.2" fill="#fff" stroke="none"/>
<text x="698" y="284.6" font-size="5.4" textLength="41" lengthAdjust="spacing" fill="#1a1a1a" stroke="#1a1a1a" stroke-width="0.06">SIGNAL LAMP</text>
<rect x="714.6" y="313.4" width="38.2" height="5.2" fill="#fff" stroke="none"/>
<text x="715.4" y="318.0" font-size="5.4" textLength="36.6" lengthAdjust="spacing" fill="#1a1a1a" stroke="#1a1a1a" stroke-width="0.06">D10-18LGN-</text>
<rect x="599.7" y="303.4" width="21.1" height="5.2" fill="#fff" stroke="none"/>
<text x="600.5" y="308.0" font-size="5.4" textLength="19.5" lengthAdjust="spacing" fill="#1a1a1a" stroke="#1a1a1a" stroke-width="0.06">RADIO</text>
<rect x="592.2" y="310.9" width="35.9" height="5.2" fill="#fff" stroke="none"/>
<text x="593" y="315.5" font-size="5.4" textLength="34.3" lengthAdjust="spacing" fill="#1a1a1a" stroke="#1a1a1a" stroke-width="0.06">CAPACITOR</text>
<rect x="611.2" y="363.0" width="35.2" height="5.2" fill="#fff" stroke="none"/>
<text x="612" y="367.6" font-size="5.4" textLength="33.6" lengthAdjust="spacing" fill="#1a1a1a" stroke="#1a1a1a" stroke-width="0.06">E-10A-18BK</text>
<rect x="639.2" y="342.2" width="21.1" height="5.2" fill="#fff" stroke="none"/>
<text x="640" y="346.8" font-size="5.4" textLength="19.5" lengthAdjust="spacing" fill="#1a1a1a" stroke="#1a1a1a" stroke-width="0.06">R6A-12</text>
<rect x="649.2" y="348.9" width="9.0" height="5.2" fill="#fff" stroke="none"/>
<text x="650" y="353.5" font-size="5.4" textLength="7.4" lengthAdjust="spacing" fill="#1a1a1a" stroke="#1a1a1a" stroke-width="0.06">BK</text>
<rect x="680.2" y="322.09999999999997" width="39.2" height="5.2" fill="#fff" stroke="none"/>
<text x="681" y="326.7" font-size="5.4" textLength="37.6" lengthAdjust="spacing" fill="#1a1a1a" stroke="#1a1a1a" stroke-width="0.06">DUAL BRAKE</text>
<rect x="675.9000000000001" y="329.4" width="47.9" height="5.2" fill="#fff" stroke="none"/>
<text x="676.7" y="334.0" font-size="5.4" textLength="46.3" lengthAdjust="spacing" fill="#1a1a1a" stroke="#1a1a1a" stroke-width="0.06">SYSTEMS LAMP</text>
<rect x="660.9000000000001" y="373.79999999999995" width="24.200000000000003" height="5.2" fill="#fff" stroke="none"/>
<text x="661.7" y="378.4" font-size="5.4" textLength="22.6" lengthAdjust="spacing" fill="#1a1a1a" stroke="#1a1a1a" stroke-width="0.06">P5-18BK</text>
<rect x="663.2" y="379.79999999999995" width="31.6" height="5.2" fill="#fff" stroke="none"/>
<text x="664" y="384.4" font-size="5.4" textLength="30" lengthAdjust="spacing" fill="#1a1a1a" stroke="#1a1a1a" stroke-width="0.06">P4-18DBL*</text>
<rect x="409.7" y="291.0" width="20.1" height="5.2" fill="#fff" stroke="none"/>
<text x="410.5" y="295.6" font-size="5.4" textLength="18.5" lengthAdjust="spacing" fill="#1a1a1a" stroke="#1a1a1a" stroke-width="0.06">RADIO</text>
<rect x="458.2" y="284.4" width="14.4" height="5.2" fill="#fff" stroke="none"/>
<text x="459" y="289.0" font-size="5.4" textLength="12.8" lengthAdjust="spacing" fill="#1a1a1a" stroke="#1a1a1a" stroke-width="0.06">18 R</text>
<rect x="464.7" y="354.4" width="28.6" height="5.2" fill="#fff" stroke="none"/>
<text x="465.5" y="359.0" font-size="5.4" textLength="27" lengthAdjust="spacing" fill="#1a1a1a" stroke="#1a1a1a" stroke-width="0.06">X12-18R*</text>
<rect x="514.2" y="256.4" width="37.6" height="5.2" fill="#fff" stroke="none"/>
<text x="515" y="261.0" font-size="5.4" textLength="36" lengthAdjust="spacing" fill="#1a1a1a" stroke="#1a1a1a" stroke-width="0.06">RIGHT TURN</text>
<rect x="511.8" y="263.4" width="42.6" height="5.2" fill="#fff" stroke="none"/>
<text x="512.6" y="268.0" font-size="5.4" textLength="41" lengthAdjust="spacing" fill="#1a1a1a" stroke="#1a1a1a" stroke-width="0.06">SIGNAL LAMP</text>
<rect x="529.0" y="315.4" width="21.8" height="5.2" fill="#fff" stroke="none"/>
<text x="529.8" y="320.0" font-size="5.4" textLength="20.2" lengthAdjust="spacing" fill="#1a1a1a" stroke="#1a1a1a" stroke-width="0.06">D9-18T</text>
<rect x="240.0" y="316.4" width="38.800000000000004" height="5.2" fill="#fff" stroke="none"/>
<text x="240.8" y="321.0" font-size="5.4" textLength="37.2" lengthAdjust="spacing" fill="#1a1a1a" stroke="#1a1a1a" stroke-width="0.06">GLOVE BOX</text>
<rect x="240.0" y="324.4" width="35.6" height="5.2" fill="#fff" stroke="none"/>
<text x="240.8" y="329.0" font-size="5.4" textLength="34" lengthAdjust="spacing" fill="#1a1a1a" stroke="#1a1a1a" stroke-width="0.06">LAMP, MAP</text>
<rect x="240.0" y="332.09999999999997" width="49.800000000000004" height="5.2" fill="#fff" stroke="none"/>
<text x="240.8" y="336.7" font-size="5.4" textLength="48.2" lengthAdjust="spacing" fill="#1a1a1a" stroke="#1a1a1a" stroke-width="0.06">AND COURTESY</text>
<rect x="240.0" y="339.4" width="58.1" height="5.2" fill="#fff" stroke="none"/>
<text x="240.8" y="344.0" font-size="5.4" textLength="56.5" lengthAdjust="spacing" fill="#1a1a1a" stroke="#1a1a1a" stroke-width="0.06">LAMP CONNECTOR</text>
<rect x="327.7" y="324.4" width="23.1" height="5.2" fill="#fff" stroke="none"/>
<text x="328.5" y="329.0" font-size="5.4" textLength="21.5" lengthAdjust="spacing" fill="#1a1a1a" stroke="#1a1a1a" stroke-width="0.06">M5-18P</text>
<rect x="377.2" y="338.4" width="31.6" height="5.2" fill="#fff" stroke="none"/>
<text x="378" y="343.0" font-size="5.4" textLength="30" lengthAdjust="spacing" fill="#1a1a1a" stroke="#1a1a1a" stroke-width="0.06">16BR LOW</text>
<rect x="377.2" y="345.7" width="39.1" height="5.2" fill="#fff" stroke="none"/>
<text x="378" y="350.3" font-size="5.4" textLength="37.5" lengthAdjust="spacing" fill="#1a1a1a" stroke="#1a1a1a" stroke-width="0.06">16LGN HIGH</text>
<rect x="378.2" y="352.9" width="51.0" height="5.2" fill="#fff" stroke="none"/>
<text x="379" y="357.5" font-size="5.4" textLength="49.4" lengthAdjust="spacing" fill="#1a1a1a" stroke="#1a1a1a" stroke-width="0.06">16DGN MEDIUM</text>
<rect x="403.2" y="366.4" width="23.6" height="5.2" fill="#fff" stroke="none"/>
<text x="404" y="371.0" font-size="5.4" textLength="22" lengthAdjust="spacing" fill="#1a1a1a" stroke="#1a1a1a" stroke-width="0.06">HEATER</text>
<rect x="402.2" y="373.9" width="25.6" height="5.2" fill="#fff" stroke="none"/>
<text x="403" y="378.5" font-size="5.4" textLength="24" lengthAdjust="spacing" fill="#1a1a1a" stroke="#1a1a1a" stroke-width="0.06">BLOWER</text>
<rect x="402.7" y="381.09999999999997" width="24.6" height="5.2" fill="#fff" stroke="none"/>
<text x="403.5" y="385.7" font-size="5.4" textLength="23" lengthAdjust="spacing" fill="#1a1a1a" stroke="#1a1a1a" stroke-width="0.06">SWITCH</text>
<rect x="436.2" y="379.59999999999997" width="16.6" height="5.2" fill="#fff" stroke="none"/>
<text x="437" y="384.2" font-size="5.4" textLength="15" lengthAdjust="spacing" fill="#1a1a1a" stroke="#1a1a1a" stroke-width="0.06">12BK</text>
<rect x="240.0" y="412.4" width="64.2" height="5.2" fill="#fff" stroke="none"/>
<text x="240.8" y="417.0" font-size="5.4" textLength="62.6" lengthAdjust="spacing" fill="#1a1a1a" stroke="#1a1a1a" stroke-width="0.06">TO BLOWER MOTOR</text>
<rect x="313.7" y="428.9" width="22.1" height="5.2" fill="#fff" stroke="none"/>
<text x="314.5" y="433.5" font-size="5.4" textLength="20.5" lengthAdjust="spacing" fill="#1a1a1a" stroke="#1a1a1a" stroke-width="0.06">16DGN</text>
<rect x="240.0" y="437.4" width="23.8" height="5.2" fill="#fff" stroke="none"/>
<text x="240.8" y="442.0" font-size="5.4" textLength="22.2" lengthAdjust="spacing" fill="#1a1a1a" stroke="#1a1a1a" stroke-width="0.06">HEATER</text>
<rect x="240.0" y="444.4" width="25.6" height="5.2" fill="#fff" stroke="none"/>
<text x="240.8" y="449.0" font-size="5.4" textLength="24" lengthAdjust="spacing" fill="#1a1a1a" stroke="#1a1a1a" stroke-width="0.06">BLOWER</text>
<rect x="240.0" y="451.4" width="23.6" height="5.2" fill="#fff" stroke="none"/>
<text x="240.8" y="456.0" font-size="5.4" textLength="22" lengthAdjust="spacing" fill="#1a1a1a" stroke="#1a1a1a" stroke-width="0.06">MOTOR</text>
<rect x="240.0" y="458.4" width="27.6" height="5.2" fill="#fff" stroke="none"/>
<text x="240.8" y="463.0" font-size="5.4" textLength="26" lengthAdjust="spacing" fill="#1a1a1a" stroke="#1a1a1a" stroke-width="0.06">RESISTOR</text>
<rect x="304.09999999999997" y="487.9" width="20.900000000000002" height="5.2" fill="#fff" stroke="none"/>
<text x="304.9" y="492.5" font-size="5.4" textLength="19.3" lengthAdjust="spacing" fill="#1a1a1a" stroke="#1a1a1a" stroke-width="0.06">16LGN</text>
<rect x="305.2" y="495.4" width="17.6" height="5.2" fill="#fff" stroke="none"/>
<text x="306" y="500.0" font-size="5.4" textLength="16" lengthAdjust="spacing" fill="#1a1a1a" stroke="#1a1a1a" stroke-width="0.06">16BR</text>
<rect x="366.2" y="439.4" width="24.3" height="5.2" fill="#fff" stroke="none"/>
<text x="367" y="444.0" font-size="5.4" textLength="22.7" lengthAdjust="spacing" fill="#1a1a1a" stroke="#1a1a1a" stroke-width="0.06">M5-18P</text>
<rect x="369.59999999999997" y="448.9" width="10.2" height="5.2" fill="#fff" stroke="none"/>
<text x="370.4" y="453.5" font-size="5.4" textLength="8.6" lengthAdjust="spacing" fill="#1a1a1a" stroke="#1a1a1a" stroke-width="0.06">X1</text>
<rect x="369.2" y="456.09999999999997" width="11.6" height="5.2" fill="#fff" stroke="none"/>
<text x="370" y="460.7" font-size="5.4" textLength="10" lengthAdjust="spacing" fill="#1a1a1a" stroke="#1a1a1a" stroke-width="0.06">16R</text>
<rect x="387.8" y="471.4" width="20.0" height="5.2" fill="#fff" stroke="none"/>
<text x="388.6" y="476.0" font-size="5.4" textLength="18.4" lengthAdjust="spacing" fill="#1a1a1a" stroke="#1a1a1a" stroke-width="0.06">CIGAR</text>
<rect x="385.7" y="479.0" width="25.1" height="5.2" fill="#fff" stroke="none"/>
<text x="386.5" y="483.6" font-size="5.4" textLength="23.5" lengthAdjust="spacing" fill="#1a1a1a" stroke="#1a1a1a" stroke-width="0.06">LIGHTER</text>
<rect x="520.2" y="410.79999999999995" width="28.6" height="5.2" fill="#fff" stroke="none"/>
<text x="521" y="415.4" font-size="5.4" textLength="27" lengthAdjust="spacing" fill="#1a1a1a" stroke="#1a1a1a" stroke-width="0.06">E2E-18 O</text>
<rect x="690.2" y="433.7" width="26.6" height="5.2" fill="#fff" stroke="none"/>
<text x="691" y="438.3" font-size="5.4" textLength="25" lengthAdjust="spacing" fill="#1a1a1a" stroke="#1a1a1a" stroke-width="0.06">D9A-18T</text>
<rect x="720.0" y="428.59999999999997" width="32.2" height="5.2" fill="#fff" stroke="none"/>
<text x="720.8" y="433.2" font-size="5.4" textLength="30.6" lengthAdjust="spacing" fill="#1a1a1a" stroke="#1a1a1a" stroke-width="0.06">M2A-18Y —</text>
<rect x="618.9000000000001" y="439.0" width="23.900000000000002" height="5.2" fill="#fff" stroke="none"/>
<text x="619.7" y="443.6" font-size="5.4" textLength="22.3" lengthAdjust="spacing" fill="#1a1a1a" stroke="#1a1a1a" stroke-width="0.06">Q3-12R</text>
<rect x="623.5" y="445.9" width="22.0" height="5.2" fill="#fff" stroke="none"/>
<text x="624.3" y="450.5" font-size="5.4" textLength="20.4" lengthAdjust="spacing" fill="#1a1a1a" stroke="#1a1a1a" stroke-width="0.06">H1-16V</text>
<rect x="618.0" y="454.4" width="25.700000000000003" height="5.2" fill="#fff" stroke="none"/>
<text x="618.8" y="459.0" font-size="5.4" textLength="24.1" lengthAdjust="spacing" fill="#1a1a1a" stroke="#1a1a1a" stroke-width="0.06">R6-12BK</text>
<rect x="726.2" y="463.4" width="26.0" height="5.2" fill="#fff" stroke="none"/>
<text x="727" y="468.0" font-size="5.4" textLength="24.4" lengthAdjust="spacing" fill="#1a1a1a" stroke="#1a1a1a" stroke-width="0.06">V1-16P -</text>
<rect x="719.2" y="470.4" width="33.0" height="5.2" fill="#fff" stroke="none"/>
<text x="720" y="475.0" font-size="5.4" textLength="31.4" lengthAdjust="spacing" fill="#1a1a1a" stroke="#1a1a1a" stroke-width="0.06">Q2-12BK —</text>
<rect x="721.8000000000001" y="445.09999999999997" width="30.400000000000002" height="5.2" fill="#fff" stroke="none"/>
<text x="722.6" y="449.7" font-size="5.4" textLength="28.8" lengthAdjust="spacing" fill="#1a1a1a" stroke="#1a1a1a" stroke-width="0.06">J1-12R —</text>
<rect x="717.2" y="439.9" width="35.0" height="5.2" fill="#fff" stroke="none"/>
<text x="718" y="444.5" font-size="5.4" textLength="33.4" lengthAdjust="spacing" fill="#1a1a1a" stroke="#1a1a1a" stroke-width="0.06">L1-16BK* —</text>
<rect x="686.6" y="421.9" width="32.2" height="5.2" fill="#fff" stroke="none"/>
<text x="687.4" y="426.5" font-size="5.4" textLength="30.6" lengthAdjust="spacing" fill="#1a1a1a" stroke="#1a1a1a" stroke-width="0.06">P4-18DBL*</text>
<rect x="719.2" y="412.29999999999995" width="31.1" height="5.2" fill="#fff" stroke="none"/>
<text x="720" y="416.9" font-size="5.4" textLength="29.5" lengthAdjust="spacing" fill="#1a1a1a" stroke="#1a1a1a" stroke-width="0.06">D4A-18W —</text>
<rect x="719.2" y="416.9" width="32.6" height="5.2" fill="#fff" stroke="none"/>
<text x="720" y="421.5" font-size="5.4" textLength="31" lengthAdjust="spacing" fill="#1a1a1a" stroke="#1a1a1a" stroke-width="0.06">D32-18R* —</text>
<rect x="708.9000000000001" y="457.29999999999995" width="43.300000000000004" height="5.2" fill="#fff" stroke="none"/>
<text x="709.7" y="461.9" font-size="5.4" textLength="41.7" lengthAdjust="spacing" fill="#1a1a1a" stroke="#1a1a1a" stroke-width="0.06">D10A-18LGN —</text>
<rect x="720.0" y="475.09999999999997" width="32.2" height="5.2" fill="#fff" stroke="none"/>
<text x="720.8" y="479.7" font-size="5.4" textLength="30.6" lengthAdjust="spacing" fill="#1a1a1a" stroke="#1a1a1a" stroke-width="0.06">D7-18BR —</text>
<rect x="549.2" y="470.79999999999995" width="38.6" height="5.2" fill="#fff" stroke="none"/>
<text x="550" y="475.4" font-size="5.4" textLength="37" lengthAdjust="spacing" fill="#1a1a1a" stroke="#1a1a1a" stroke-width="0.06">D10A-18LGN -</text>
<rect x="548.2" y="482.4" width="32.2" height="5.2" fill="#fff" stroke="none"/>
<text x="549" y="487.0" font-size="5.4" textLength="30.6" lengthAdjust="spacing" fill="#1a1a1a" stroke="#1a1a1a" stroke-width="0.06">D8-18DGN-</text>
<rect x="542.6" y="497.4" width="30.200000000000003" height="5.2" fill="#fff" stroke="none"/>
<text x="543.4" y="502.0" font-size="5.4" textLength="28.6" lengthAdjust="spacing" fill="#1a1a1a" stroke="#1a1a1a" stroke-width="0.06">D6-18LGN</text>
<rect x="550.9000000000001" y="502.9" width="22.900000000000002" height="5.2" fill="#fff" stroke="none"/>
<text x="551.7" y="507.5" font-size="5.4" textLength="21.3" lengthAdjust="spacing" fill="#1a1a1a" stroke="#1a1a1a" stroke-width="0.06">D2-18R-</text>
<rect x="543.9000000000001" y="513.0" width="28.900000000000002" height="5.2" fill="#fff" stroke="none"/>
<text x="544.7" y="517.6" font-size="5.4" textLength="27.3" lengthAdjust="spacing" fill="#1a1a1a" stroke="#1a1a1a" stroke-width="0.06">D9A-18T-</text>
<rect x="543.9000000000001" y="519.0" width="21.6" height="5.2" fill="#fff" stroke="none"/>
<text x="544.7" y="523.6" font-size="5.4" textLength="20" lengthAdjust="spacing" fill="#1a1a1a" stroke="#1a1a1a" stroke-width="0.06">D3-18T</text>
<rect x="543.2" y="525.8" width="29.6" height="5.2" fill="#fff" stroke="none"/>
<text x="544" y="530.4" font-size="5.4" textLength="28" lengthAdjust="spacing" fill="#1a1a1a" stroke="#1a1a1a" stroke-width="0.06">H3-18BK*</text>
<rect x="543.5" y="535.4" width="28.3" height="5.2" fill="#fff" stroke="none"/>
<text x="544.3" y="540.0" font-size="5.4" textLength="26.7" lengthAdjust="spacing" fill="#1a1a1a" stroke="#1a1a1a" stroke-width="0.06">D29-18T*</text>
<rect x="448.9" y="529.4" width="18.3" height="5.2" fill="#fff" stroke="none"/>
<text x="449.7" y="534.0" font-size="5.4" textLength="16.7" lengthAdjust="spacing" fill="#1a1a1a" stroke="#1a1a1a" stroke-width="0.06">C1-12</text>
<rect x="451.2" y="537.4" width="13.6" height="5.2" fill="#fff" stroke="none"/>
<text x="452" y="542.0" font-size="5.4" textLength="12" lengthAdjust="spacing" fill="#1a1a1a" stroke="#1a1a1a" stroke-width="0.06">BK*</text>
<rect x="248.2" y="519.0" width="17.6" height="5.2" fill="#fff" stroke="none"/>
<text x="249" y="523.6" font-size="5.4" textLength="16" lengthAdjust="spacing" fill="#1a1a1a" stroke="#1a1a1a" stroke-width="0.06">TURN</text>
<rect x="244.5" y="526.4" width="24.6" height="5.2" fill="#fff" stroke="none"/>
<text x="245.3" y="531.0" font-size="5.4" textLength="23" lengthAdjust="spacing" fill="#1a1a1a" stroke="#1a1a1a" stroke-width="0.06">SIGNAL</text>
<rect x="243.89999999999998" y="533.4" width="26.3" height="5.2" fill="#fff" stroke="none"/>
<text x="244.7" y="538.0" font-size="5.4" textLength="24.7" lengthAdjust="spacing" fill="#1a1a1a" stroke="#1a1a1a" stroke-width="0.06">FLASHER</text>
<rect x="304.09999999999997" y="524.0" width="22.0" height="5.2" fill="#fff" stroke="none"/>
<text x="304.9" y="528.6" font-size="5.4" textLength="20.4" lengthAdjust="spacing" fill="#1a1a1a" stroke="#1a1a1a" stroke-width="0.06">D2-18R</text>
<rect x="301.9" y="531.4" width="25.200000000000003" height="5.2" fill="#fff" stroke="none"/>
<text x="302.7" y="536.0" font-size="5.4" textLength="23.6" lengthAdjust="spacing" fill="#1a1a1a" stroke="#1a1a1a" stroke-width="0.06">D1-18BK</text>
<rect x="686.6" y="496.4" width="16.400000000000002" height="5.2" fill="#fff" stroke="none"/>
<text x="687.4" y="501.0" font-size="5.4" textLength="14.8" lengthAdjust="spacing" fill="#1a1a1a" stroke="#1a1a1a" stroke-width="0.06">TURN</text>
<rect x="682.9000000000001" y="504.0" width="23.900000000000002" height="5.2" fill="#fff" stroke="none"/>
<text x="683.7" y="508.6" font-size="5.4" textLength="22.3" lengthAdjust="spacing" fill="#1a1a1a" stroke="#1a1a1a" stroke-width="0.06">SIGNAL</text>
<rect x="682.9000000000001" y="511.4" width="24.8" height="5.2" fill="#fff" stroke="none"/>
<text x="683.7" y="516.0" font-size="5.4" textLength="23.2" lengthAdjust="spacing" fill="#1a1a1a" stroke="#1a1a1a" stroke-width="0.06">SWITCH</text>
<rect x="632.8000000000001" y="480.9" width="13.7" height="5.2" fill="#fff" stroke="none"/>
<text x="633.6" y="485.5" font-size="5.4" textLength="12.1" lengthAdjust="spacing" fill="#1a1a1a" stroke="#1a1a1a" stroke-width="0.06">18W</text>
<rect x="648.6" y="484.4" width="22.0" height="5.2" fill="#fff" stroke="none"/>
<text x="649.4" y="489.0" font-size="5.4" textLength="20.4" lengthAdjust="spacing" fill="#1a1a1a" stroke="#1a1a1a" stroke-width="0.06">18DGN</text>
<rect x="641.2" y="492.9" width="20.1" height="5.2" fill="#fff" stroke="none"/>
<text x="642" y="497.5" font-size="5.4" textLength="18.5" lengthAdjust="spacing" fill="#1a1a1a" stroke="#1a1a1a" stroke-width="0.06">18LGN</text>
<rect x="645.8000000000001" y="503.0" width="11.799999999999999" height="5.2" fill="#fff" stroke="none"/>
<text x="646.6" y="507.6" font-size="5.4" textLength="10.2" lengthAdjust="spacing" fill="#1a1a1a" stroke="#1a1a1a" stroke-width="0.06">18R</text>
<rect x="644.9000000000001" y="513.4" width="10.9" height="5.2" fill="#fff" stroke="none"/>
<text x="645.7" y="518.0" font-size="5.4" textLength="9.3" lengthAdjust="spacing" fill="#1a1a1a" stroke="#1a1a1a" stroke-width="0.06">18T</text>
<rect x="644.9000000000001" y="524.1999999999999" width="15.5" height="5.2" fill="#fff" stroke="none"/>
<text x="645.7" y="528.8" font-size="5.4" textLength="13.9" lengthAdjust="spacing" fill="#1a1a1a" stroke="#1a1a1a" stroke-width="0.06">18BK</text>
<rect x="643.0" y="544.0" width="16.400000000000002" height="5.2" fill="#fff" stroke="none"/>
<text x="643.8" y="548.6" font-size="5.4" textLength="14.8" lengthAdjust="spacing" fill="#1a1a1a" stroke="#1a1a1a" stroke-width="0.06">18BR</text>
</g></svg>
<!--/DIAGRAM-->
</body></html>
